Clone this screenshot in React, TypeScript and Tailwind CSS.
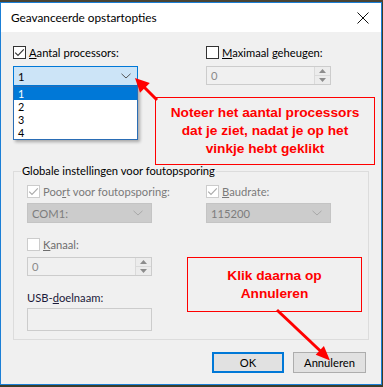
const ui = "font-['Lato',sans-serif] text-[11.2px] leading-[13px]";
const callout = "font-['Liberation_Sans',Arial,sans-serif] font-bold text-[13.7px] leading-[18px] text-[#ff0000] text-center";

function Check({ checked, disabled }: { checked?: boolean; disabled?: boolean }) {
  return (
    <span
      className={
        disabled
          ? "w-[13px] h-[13px] shrink-0 border border-[#cccccc] bg-white flex items-center justify-center"
          : "w-[13px] h-[13px] shrink-0 border border-[#333333] bg-white flex items-center justify-center"
      }
    >
      {checked && (
        <svg width="11" height="11" viewBox="0 0 11 11">
          <path d="M1.2 5.6 L4 8.4 L9.8 2.4" fill="none" stroke={disabled ? "#a9a9a9" : "#333333"} strokeWidth="1.1" />
        </svg>
      )}
    </span>
  );
}

function Chevron({ color }: { color: string }) {
  return (
    <svg width="10" height="6" viewBox="0 0 10 6">
      <path d="M0.5 0.8 L5 5 L9.5 0.8" fill="none" stroke={color} strokeWidth="1" />
    </svg>
  );
}

function Spin({ value }: { value: string }) {
  return (
    <div className="w-[125px] h-[19px] border border-[#cccccc] bg-[#f0f0f0] flex">
      <div className="flex-1 flex items-center pl-[4px] text-[#8a8a8a]">{value}</div>
      <div className="w-[16px] flex flex-col border-l border-[#dadada] bg-[#ececec]">
        <div className="flex-1 flex items-center justify-center border-b border-[#dadada]">
          <svg width="7" height="4" viewBox="0 0 7 4">
            <path d="M0 4 L3.5 0 L7 4 Z" fill="#8c8c8c" />
          </svg>
        </div>
        <div className="flex-1 flex items-center justify-center">
          <svg width="7" height="4" viewBox="0 0 7 4">
            <path d="M0 0 L3.5 4 L7 0 Z" fill="#8c8c8c" />
          </svg>
        </div>
      </div>
    </div>
  );
}

function DisabledCombo({ value }: { value: string }) {
  return (
    <div className="w-[125px] h-[20px] bg-[#cccccc] border border-[#c4c4c4] flex items-center justify-between pl-[4px] pr-[8px] text-[#7d7d7d]">
      <span>{value}</span>
      <Chevron color="#a8a8a8" />
    </div>
  );
}

export default function App() {
  return (
    <div className={"relative w-[383px] h-[387px] overflow-hidden bg-[#3b3d2a] " + ui}>
      <div className="h-[2px] bg-[#4a4434]" />
      <div className="w-[382px] h-[383px] border border-[#1b7fd6] flex flex-col bg-[#f0f0f0] text-black">
        {/* titelbalk */}
        <div className="h-[29px] bg-white flex items-center justify-between pl-[10px] pr-[12px] text-[11.8px]">
          <span>Geavanceerde opstartopties</span>
          <svg width="12" height="12" viewBox="0 0 12 12">
            <path d="M0.5 0.5 L11.5 11.5 M11.5 0.5 L0.5 11.5" stroke="#111" strokeWidth="1" />
          </svg>
        </div>

        <div className="flex-1 pl-[12px]">
          <div className="mt-[14px] grid grid-cols-[193px_1fr]">
            <label className="flex items-center gap-[3px] h-[13px]">
              <Check checked />
              <span>
                <span className="underline underline-offset-[1px]">A</span>antal processors:
              </span>
            </label>
            <label className="flex items-center gap-[3px] h-[13px]">
              <Check />
              <span>
                <span className="underline underline-offset-[1px]">M</span>aximaal geheugen:
              </span>
            </label>
          </div>

          <div className="mt-[7px] grid grid-cols-[193px_1fr] items-start">
            <div className="relative w-[125px]">
              <div className="h-[20px] bg-[#cce4f7] border border-[#0078d7] flex items-center justify-between pl-[4px] pr-[6px]">
                <span>1</span>
                <Chevron color="#555555" />
              </div>
              <ul className="absolute left-0 top-full w-[125px] h-[54px] bg-white border border-[#2a6db5] shadow-[2px_2px_3px_rgba(0,0,0,0.3)] text-[10.8px]">
                <li className="h-[13px] pl-[4px] bg-[#0078d7] text-white">1</li>
                <li className="h-[13px] pl-[4px]">2</li>
                <li className="h-[13px] pl-[4px]">3</li>
                <li className="h-[13px] pl-[4px]">4</li>
              </ul>
            </div>
            <Spin value="0" />
          </div>

          <div className="relative mt-[85px] w-[356px] h-[169px] border border-[#dcdcdc] pl-[13px]">
            <span className="absolute top-[-8px] left-[7px] px-[1px] bg-[#f0f0f0]">Globale instellingen voor foutopsporing</span>

            <div className="mt-[13px] grid grid-cols-[179px_1fr] text-[#7a7a7a]">
              <label className="flex items-center gap-[3px] h-[13px]">
                <Check checked disabled />
                <span>
                  Poo<span className="underline underline-offset-[1px]">r</span>t voor foutopsporing:
                </span>
              </label>
              <label className="flex items-center gap-[3px] h-[13px]">
                <Check checked disabled />
                <span>
                  <span className="underline underline-offset-[1px]">B</span>audrate:
                </span>
              </label>
            </div>

            <div className="mt-[5px] grid grid-cols-[179px_1fr]">
              <DisabledCombo value="COM1:" />
              <DisabledCombo value="115200" />
            </div>

            <label className="mt-[15px] flex items-center gap-[3px] h-[13px] text-[#6d6d6d]">
              <Check disabled />
              <span>
                <span className="underline underline-offset-[1px]">K</span>anaal:
              </span>
            </label>

            <div className="mt-[6px]">
              <Spin value="0" />
            </div>

            <div className="mt-[15px] h-[13px] text-[#1a1a3a]">
              USB-<span className="underline underline-offset-[1px]">d</span>oelnaam:
            </div>
            <div className="mt-[4px] w-[125px] h-[23px] border border-[#cccccc] bg-[#f0f0f0]" />
          </div>

          <div className="mt-[12px] flex justify-end gap-[9px] pr-[15px]">
            <button className="w-[72px] h-[21px] border-2 border-[#0078d7] bg-[#e1e1e1] flex items-center justify-center">
              OK
            </button>
            <button className="w-[73px] h-[21px] border border-[#adadad] bg-[#e1e1e1] flex items-center justify-center">
              Annuleren
            </button>
          </div>
        </div>
      </div>

      {/* aantekeningen */}
      <div className={"absolute left-[155px] top-[97px] w-[220px] h-[68px] border border-[#ff0000] flex flex-col justify-center " + callout}>
        <p>Noteer het aantal processors</p>
        <p>dat je ziet, nadat je op het</p>
        <p>vinkje hebt geklikt</p>
      </div>
      <div className={"absolute left-[187px] top-[257px] w-[175px] h-[55px] border border-[#ff0000] flex flex-col justify-center " + callout}>
        <p>Klik daarna op</p>
        <p>Annuleren</p>
      </div>

      <svg className="absolute inset-0 pointer-events-none" width="383" height="387" viewBox="0 0 383 387">
        <line x1="157" y1="100" x2="142" y2="85" stroke="#ff0000" strokeWidth="3" />
        <polygon points="135,78 149.8,83 140,92.8" fill="#ff0000" />
        <line x1="277" y1="310" x2="322" y2="352.5" stroke="#ff0000" strokeWidth="3" />
        <polygon points="330,360.5 315.7,354.8 323.9,346" fill="#ff0000" />
      </svg>
    </div>
  );
}
